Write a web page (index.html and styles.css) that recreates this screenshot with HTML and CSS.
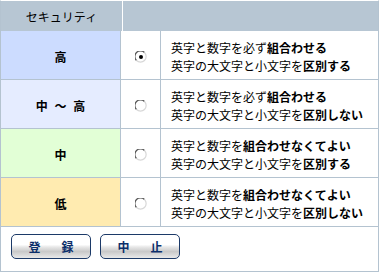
FILE: index.html
```html
<!DOCTYPE html>
<html lang="ja">
<head>
    <meta charset="UTF-8">
    <title>セキュリティ</title>
    <link rel="stylesheet" href="styles.css">
</head>
<body>
    <div id="panel">
        <div class="head">
            <div class="head-title">セキュリティ</div>
            <div class="head-rest"></div>
        </div>

        <div class="row">
            <div class="level lv-high">高</div>
            <div class="pick">
                <svg class="radio" width="12" height="12" viewBox="0 0 12 12">
                    <circle cx="6" cy="6" r="5.5" fill="#fff"/>
                    <path d="M1.5 9.5 A5.5 5.5 0 0 1 9.5 1.5" fill="none" stroke="#555" stroke-width="1.2"/>
                    <path d="M9.5 1.5 A5.5 5.5 0 0 1 1.5 9.5" fill="none" stroke="#d8d8d8" stroke-width="1.2"/>
                    <circle cx="6" cy="6" r="2" fill="#000"/>
                </svg>
            </div>
            <div class="desc">
                <p>英字と数字を必ず<b>組合わせる</b></p>
                <p>英字の大文字と小文字を<b>区別する</b></p>
            </div>
        </div>

        <div class="row">
            <div class="level lv-midhigh">中 ～ 高</div>
            <div class="pick">
                <svg class="radio" width="12" height="12" viewBox="0 0 12 12">
                    <circle cx="6" cy="6" r="5.5" fill="#fff"/>
                    <path d="M1.5 9.5 A5.5 5.5 0 0 1 9.5 1.5" fill="none" stroke="#555" stroke-width="1.2"/>
                    <path d="M9.5 1.5 A5.5 5.5 0 0 1 1.5 9.5" fill="none" stroke="#d8d8d8" stroke-width="1.2"/>
                </svg>
            </div>
            <div class="desc">
                <p>英字と数字を必ず<b>組合わせる</b></p>
                <p>英字の大文字と小文字を<b>区別しない</b></p>
            </div>
        </div>

        <div class="row">
            <div class="level lv-mid">中</div>
            <div class="pick">
                <svg class="radio" width="12" height="12" viewBox="0 0 12 12">
                    <circle cx="6" cy="6" r="5.5" fill="#fff"/>
                    <path d="M1.5 9.5 A5.5 5.5 0 0 1 9.5 1.5" fill="none" stroke="#555" stroke-width="1.2"/>
                    <path d="M9.5 1.5 A5.5 5.5 0 0 1 1.5 9.5" fill="none" stroke="#d8d8d8" stroke-width="1.2"/>
                </svg>
            </div>
            <div class="desc">
                <p>英字と数字を<b>組合わせなくてよい</b></p>
                <p>英字の大文字と小文字を<b>区別する</b></p>
            </div>
        </div>

        <div class="row">
            <div class="level lv-low">低</div>
            <div class="pick">
                <svg class="radio" width="12" height="12" viewBox="0 0 12 12">
                    <circle cx="6" cy="6" r="5.5" fill="#fff"/>
                    <path d="M1.5 9.5 A5.5 5.5 0 0 1 9.5 1.5" fill="none" stroke="#555" stroke-width="1.2"/>
                    <path d="M9.5 1.5 A5.5 5.5 0 0 1 1.5 9.5" fill="none" stroke="#d8d8d8" stroke-width="1.2"/>
                </svg>
            </div>
            <div class="desc">
                <p>英字と数字を<b>組合わせなくてよい</b></p>
                <p>英字の大文字と小文字を<b>区別しない</b></p>
            </div>
        </div>

        <div class="foot">
            <div class="btn"><span>登</span><span>録</span></div>
            <div class="btn"><span>中</span><span>止</span></div>
        </div>
    </div>
</body>
</html>
```

FILE: styles.css
```css
*{
    margin: 0px;
    padding: 0px;
}

body{
    font-family: "Noto Sans CJK JP", "Liberation Sans", sans-serif;
    font-size: 12px;
    color: #000;
    background: #fff;
}

#panel{
    width: 379px;
    height: 272px;
    box-sizing: border-box;
    border: 1px solid #b4c3d0;
    border-top-color: #fff;
    display: flex;
    flex-direction: column;
}

/* header */
#panel .head{
    height: 30px;
    display: flex;
    background: #b7c6d3;
}
#panel .head-title{
    width: 121px;
    line-height: 30px;
    padding-top: 1px;
    box-sizing: border-box;
    text-align: center;
}
#panel .head-rest{
    flex: 1;
    border-left: 1px solid #fff;
}

/* rows */
#panel .row{
    height: 48px;
    display: flex;
    border-bottom: 1px solid #b4c3d0;
}
#panel .level{
    width: 120px;
    border-right: 1px solid #b4c3d0;
    display: flex;
    align-items: center;
    justify-content: center;
    padding-top: 3px;
    box-sizing: border-box;
    font-weight: bold;
    word-spacing: 4px;
}
#panel .lv-high{ background: #ccdcff; }
#panel .lv-midhigh{ background: #e5ecff; }
#panel .lv-mid{ background: #e2ffd6; }
#panel .lv-low{ background: #ffebb0; }

#panel .pick{
    width: 40px;
    border-right: 1px solid #b4c3d0;
    display: flex;
    align-items: center;
    justify-content: center;
    padding-top: 3px;
    padding-left: 1px;
    box-sizing: border-box;
}
#panel .radio{
    display: block;
}

#panel .desc{
    flex: 1;
    display: flex;
    flex-direction: column;
    justify-content: center;
    padding: 3px 0 0 10px;
    line-height: 18px;
    white-space: nowrap;
}

/* footer buttons */
#panel .foot{
    flex: 1;
    display: flex;
    gap: 9px;
    padding: 7px 0 0 10px;
}
#panel .btn{
    width: 80px;
    height: 25px;
    box-sizing: border-box;
    border: 1px solid #1c3a68;
    border-radius: 5px;
    background: linear-gradient(#ffffff 0%, #ffffff 42%, #e8e8e8 52%, #c9c9c9 72%, #e9e9e9 100%);
    display: flex;
    align-items: center;
    justify-content: center;
    gap: 21px;
    color: #0c2f6b;
    font-weight: bold;
    font-size: 12px;
    cursor: pointer;
}
```
